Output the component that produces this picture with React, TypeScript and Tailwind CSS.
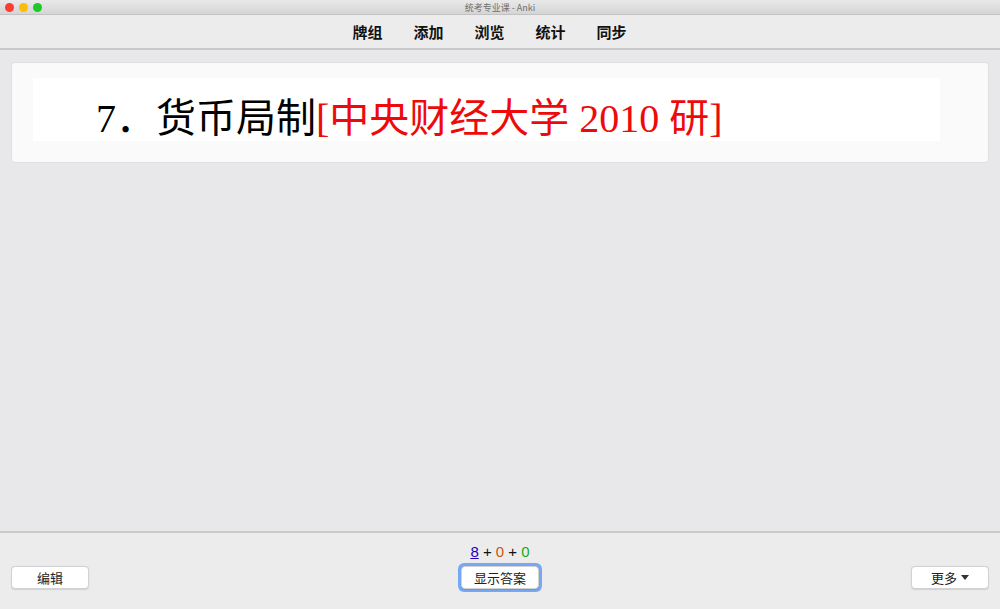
import React from 'react';

const cjk = "'Noto Sans CJK SC', 'Liberation Sans', sans-serif";
const serif = "'Liberation Serif', serif";

const tabs = ['牌组', '添加', '浏览', '统计', '同步'];

function Button({ children, focused }: { children: React.ReactNode; focused?: boolean }) {
  return (
    <div className={focused ? 'rounded-[6px] p-[3px] bg-[#77a8f6]' : ''}>
      <button className="flex h-[23px] w-[78px] items-center justify-center gap-1 rounded-[4px] border border-[#d2d2d2] bg-white text-[13px] leading-none text-[#222] shadow-[0_0.5px_1px_rgba(0,0,0,0.12)]">
        {children}
      </button>
    </div>
  );
}

export default function App() {
  return (
    <div className="flex h-[609px] w-[1000px] flex-col overflow-hidden bg-[#e8e8eb]" style={{ fontFamily: cjk }}>
      {/* Title bar */}
      <div className="relative flex h-[15px] shrink-0 items-center justify-center border-b border-[#c2c2c2] bg-gradient-to-b from-[#e9e9e9] to-[#d5d5d5]">
        <div className="absolute left-[5px] top-[3px] flex gap-[5px]">
          <span className="h-[9px] w-[9px] rounded-full bg-[#fc3b32]" />
          <span className="h-[9px] w-[9px] rounded-full bg-[#fdbb0a]" />
          <span className="h-[9px] w-[9px] rounded-full bg-[#1dc928]" />
        </div>
        <span className="text-[9px] leading-none text-[#6e6e6e]">统考专业课 - Anki</span>
      </div>

      {/* Toolbar */}
      <div className="flex h-[35px] shrink-0 items-center justify-center gap-[31px] border-b-2 border-[#c8c8c8] bg-[#ececec] pb-[1px] pr-[21px]">
        {tabs.map((t) => (
          <span key={t} className="text-[15px] font-bold leading-none text-[#111]">
            {t}
          </span>
        ))}
      </div>

      {/* Card area */}
      <div className="flex-1 px-[11px] pt-[12px]">
        <div className="h-[101px] rounded-[4px] border border-[#e0e0e2] bg-[#fafafa] pl-[21px] pr-[48px] pt-[15px]">
          <div className="flex h-[63px] items-end bg-white pb-[2px] pl-[63px]">
            <span className="whitespace-nowrap text-[40px] leading-none text-black">
              <span style={{ fontFamily: serif }}>7</span>
              <span>．</span>
              <span>货币局制</span>
              <span className="text-[#ee0a0a]">
                <span style={{ fontFamily: serif }}>[</span>中央财经大学
                <span style={{ fontFamily: serif }}> 2010 </span>研
                <span style={{ fontFamily: serif }}>]</span>
              </span>
            </span>
          </div>
        </div>
      </div>

      {/* Bottom bar */}
      <div className="flex h-[78px] shrink-0 flex-col border-t-2 border-[#cacaca] bg-[#ececec] px-[11px]">
        <div className="flex h-[30px] items-end justify-center pb-[4px] text-[15px] leading-none" style={{ fontFamily: "'Liberation Sans', sans-serif" }}>
          <span className="text-[#2200bb] underline">8</span>
          <span className="text-[#111]">&nbsp;+&nbsp;</span>
          <span className="text-[#c8560f]">0</span>
          <span className="text-[#111]">&nbsp;+&nbsp;</span>
          <span className="text-[#1aa81a]">0</span>
        </div>
        <div className="flex items-center justify-between">
          <Button>编辑</Button>
          <Button focused>显示答案</Button>
          <Button>
            更多
            <svg width="8" height="5" viewBox="0 0 8 5">
              <path d="M0 0h8L4 5z" fill="#333" />
            </svg>
          </Button>
        </div>
      </div>
    </div>
  );
}
